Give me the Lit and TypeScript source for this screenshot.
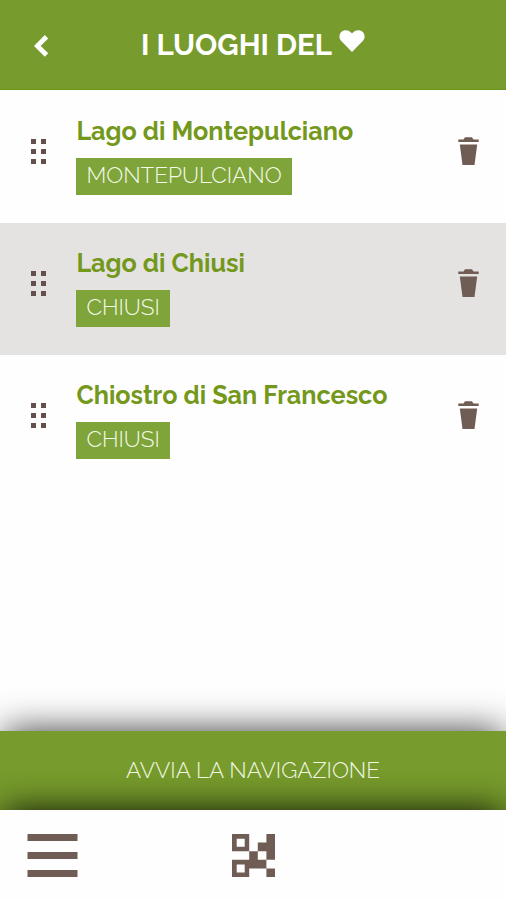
import { LitElement, html, css, svg } from "lit";
import { customElement, property } from "lit/decorators.js";

interface Place {
  name: string;
  town: string;
}

const places: Place[] = [
  { name: "Lago di Montepulciano", town: "MONTEPULCIANO" },
  { name: "Lago di Chiusi", town: "CHIUSI" },
  { name: "Chiostro di San Francesco", town: "CHIUSI" },
];

@customElement("place-row")
export class PlaceRow extends LitElement {
  @property({ attribute: false }) place!: Place;

  static styles = css`
    :host {
      display: flex;
      height: 132px;
      box-sizing: border-box;
      padding: 0 27px 0 31px;
    }
    .handle {
      display: block;
      width: 15px;
      height: 26px;
      margin-top: 48px;
      fill: #654f4b;
    }
    .info {
      flex: 1;
      margin-left: 30.4px;
      padding-top: 25px;
    }
    .name {
      color: #73981b;
      font-size: 25.2px;
      font-weight: 700;
      line-height: 30px;
      height: 30px;
      white-space: nowrap;
    }
    .town {
      display: block;
      width: fit-content;
      margin-top: 12.5px;
      box-sizing: border-box;
      height: 36.5px;
      padding: 0 10px;
      background: #7fa43a;
      color: #f4faea;
      font-size: 22.5px;
      font-weight: 300;
      line-height: 34px;
      white-space: nowrap;
    }
    .trash {
      display: block;
      width: 21px;
      height: 28px;
      margin-top: 46px;
      fill: #6f5c54;
    }
  `;

  render() {
    const p = this.place;
    return html`
      <svg class="handle" viewBox="0 0 15 26">
        ${[0, 10, 20].map(
          (y) => svg`<rect x="0" y=${y} width="5" height="5" /><rect x="10" y=${y} width="5" height="5" />`
        )}
      </svg>
      <div class="info">
        <div class="name">${p.name}</div>
        <div class="town">${p.town}</div>
      </div>
      <svg class="trash" viewBox="0 0 21 28">
        <path d="M0.3 5V2.4H5.5L7 0.3H14L15.5 2.4H20.7V5ZM1.8 7.4H19.2L16.5 28H4.5Z" />
      </svg>
    `;
  }
}

@customElement("app-root")
export class AppRoot extends LitElement {
  static styles = css`
    :host {
      display: flex;
      flex-direction: column;
      height: 900px;
      overflow: hidden;
      background: #fefefe;
      font-family: Raleway, Lato, "Open Sans", sans-serif;
    }
    .header {
      display: flex;
      align-items: flex-start;
      height: 90px;
      box-sizing: border-box;
      padding-left: 34px;
      background: #779b2c;
      border-bottom: 1px solid #6c9217;
      color: #fff;
    }
    .back {
      width: 15px;
      height: 22px;
      margin-top: 34.5px;
      fill: none;
      stroke: #fff;
      stroke-width: 4.8;
    }
    .title {
      width: 191px;
      margin: 27px 0 0 92px;
      font-size: 29.4px;
      font-weight: 700;
      line-height: 36px;
      white-space: nowrap;
    }
    .heart {
      width: 26px;
      height: 23px;
      margin: 30px 0 0 7px;
      fill: #fff;
    }
    .list {
      flex: 1;
      padding-top: 0.5px;
    }
    .alt {
      background: #e5e3e2;
    }
    .start {
      display: flex;
      justify-content: center;
      height: 79px;
      background: #779b2c;
      box-shadow: 0 -4px 36px -4px rgba(0, 0, 0, 0.78);
      color: #f2f8e4;
      font-size: 22.5px;
      font-weight: 300;
      line-height: 78px;
      white-space: nowrap;
    }
    .footer {
      display: flex;
      height: 90px;
      box-sizing: border-box;
      padding: 24px 27px;
      gap: 154px;
      background: #fefefe;
      box-shadow: 0 -4px 34px -4px rgba(0, 0, 0, 0.9);
    }
    .menu {
      width: 51px;
      height: 44px;
      fill: #6f5c54;
    }
    .code {
      width: 43px;
      height: 43px;
      fill: #6f5c54;
    }
  `;

  render() {
    return html`
      <div class="header">
        <svg class="back" viewBox="0 0 15 22"><path d="M12.5 1.8L3.4 10.9L12.5 20" /></svg>
        <div class="title">I LUOGHI DEL</div>
        <svg class="heart" viewBox="0 0 26 23">
          <path d="M13 22L2 10.8C-0.4 8.2 0 3.6 2.8 1.6C5.8-0.6 9.6 0.1 11.7 2.2L13 3.5L14.3 2.2C16.4 0.1 20.2-0.6 23.2 1.6C26 3.6 26.4 8.2 24 10.8Z" />
        </svg>
      </div>
      <div class="list">
        ${places.map((p, i) => html`<place-row class=${i % 2 ? "alt" : ""} .place=${p}></place-row>`)}
      </div>
      <div class="start"><span class="label">AVVIA LA NAVIGAZIONE</span></div>
      <div class="footer">
        <svg class="menu" viewBox="0 0 51 44">
          <path d="M0.5 0H50.5V7H0.5ZM0.5 18H50.5V25H0.5ZM0.5 36H50.5V43H0.5Z" />
        </svg>
        <svg class="code" viewBox="0 0 43 43">
          <path
            fill-rule="evenodd"
            d="M0 0H17.2V17.2H0ZM4.7 4.7V12.7H12.7V4.7ZM34.4 0H43V25.8H34.4V17.2H25.8V8.6H34.4ZM17.2 17.2H25.8V25.8H34.4V34.4H17.2V43H0V25.8H17.2ZM4.7 30.5V38.5H12.7V30.5ZM34.4 34.4H43V43H34.4Z"
          />
        </svg>
      </div>
    `;
  }
}
